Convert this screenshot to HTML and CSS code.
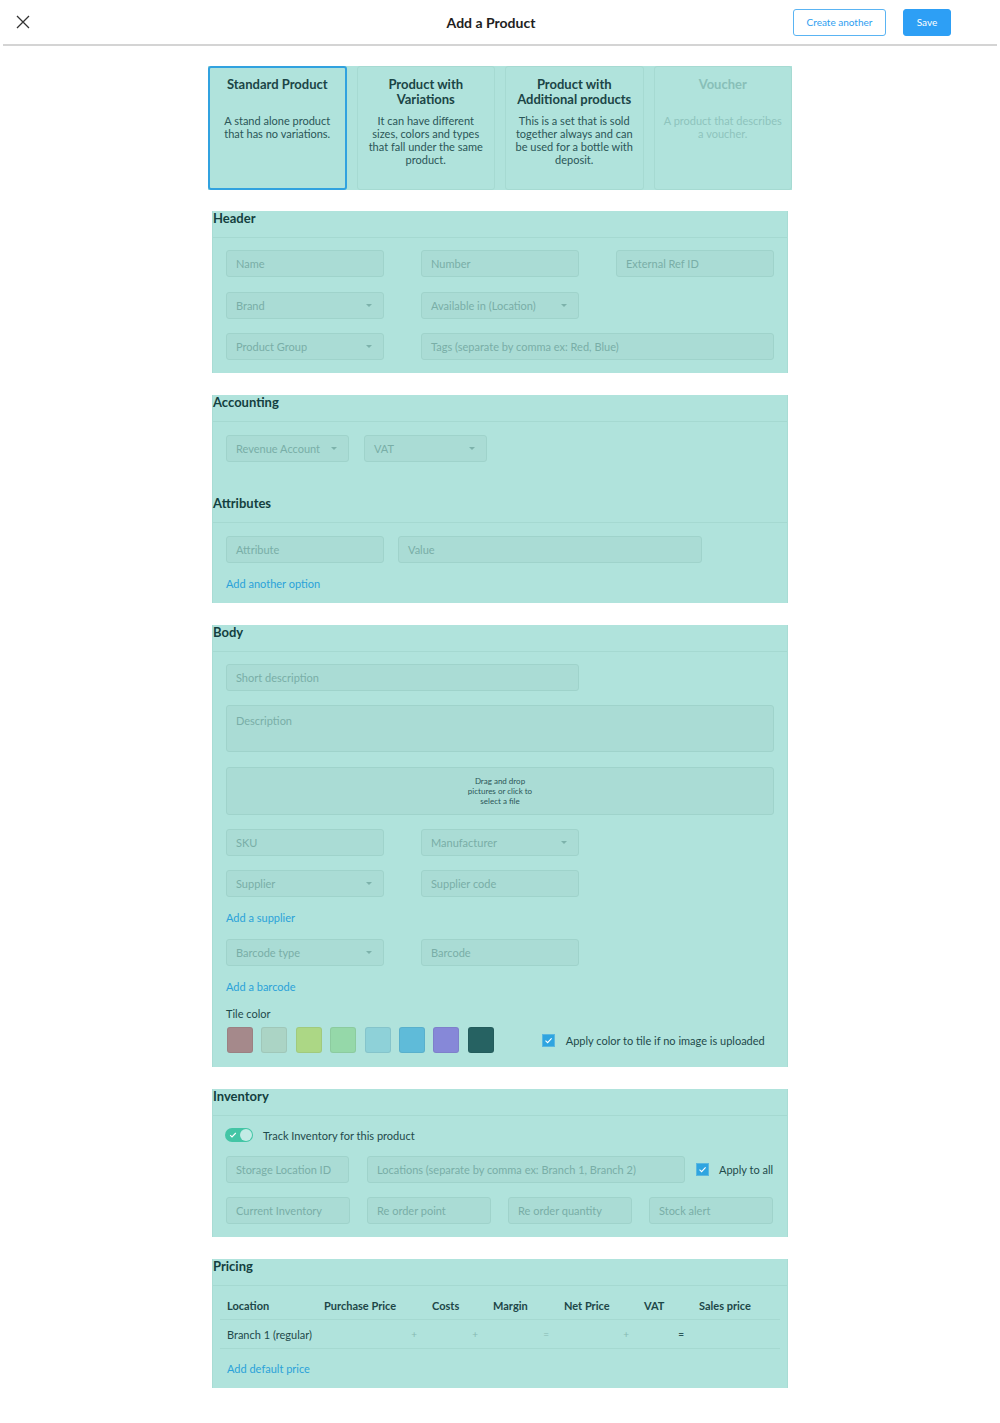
FILE: index.html
```html
<!DOCTYPE html>
<html>
<head>
<meta charset="utf-8">
<title>Add a Product</title>
<link rel="stylesheet" href="styles.css">
</head>
<body>
<header class="topbar">
  <div class="tb-left">
    <svg class="close" width="14" height="14" viewBox="0 0 14 14"><path d="M1 1L13 13M13 1L1 13" stroke="#333" stroke-width="1.3" fill="none"/></svg>
  </div>
  <h1 class="tb-title">Add a Product</h1>
  <div class="tb-right">
    <button class="btn btn-outline">Create another</button>
    <button class="btn btn-primary">Save</button>
  </div>
</header>

<main class="page">
  <div class="types">
    <div class="type-card selected">
      <div class="type-title">Standard Product</div>
      <div class="type-desc">A stand alone product that has no variations.</div>
    </div>
    <div class="type-card">
      <div class="type-title">Product with Variations</div>
      <div class="type-desc">It can have different sizes, colors and types that fall under the same product.</div>
    </div>
    <div class="type-card">
      <div class="type-title">Product with Additional products</div>
      <div class="type-desc">This is a set that is sold together always and can be used for a bottle with deposit.</div>
    </div>
    <div class="type-card disabled">
      <div class="type-title">Voucher</div>
      <div class="type-desc">A product that describes a voucher.</div>
    </div>
  </div>

  <section class="block first">
    <h2 class="sec-title">Header</h2>
    <div class="panel grid3">
      <div class="field">Name</div>
      <div class="field">Number</div>
      <div class="field">External Ref ID</div>
      <div class="field select">Brand</div>
      <div class="field select">Available in (Location)</div>
      <div></div>
      <div class="field select">Product Group</div>
      <div class="field span2">Tags (separate by comma ex: Red, Blue)</div>
    </div>
  </section>

  <section class="block group">
    <div class="sub">
      <h2 class="sec-title">Accounting</h2>
      <div class="panel row-acc">
        <div class="field select w123">Revenue Account</div>
        <div class="field select w123">VAT</div>
      </div>
    </div>
    <div class="sub">
      <h2 class="sec-title">Attributes</h2>
      <div class="panel col attr">
        <div class="row-attr">
          <div class="field w158">Attribute</div>
          <div class="field wval">Value</div>
        </div>
        <a class="link">Add another option</a>
      </div>
    </div>
  </section>

  <section class="block">
    <h2 class="sec-title">Body</h2>
    <div class="panel col body-panel">
      <div class="field w353">Short description</div>
      <div class="field area">Description</div>
      <div class="drop">Drag and drop<br>pictures or click to<br>select a file</div>
      <div class="pair">
        <div class="field">SKU</div>
        <div class="field select">Manufacturer</div>
      </div>
      <div class="pair">
        <div class="field select">Supplier</div>
        <div class="field">Supplier code</div>
      </div>
      <a class="link">Add a supplier</a>
      <div class="pair">
        <div class="field select">Barcode type</div>
        <div class="field">Barcode</div>
      </div>
      <a class="link">Add a barcode</a>
      <div class="tile">
        <div class="tile-label">Tile color</div>
        <div class="tile-row">
          <div class="swatches">
            <span class="sw" style="background:#a5898b"></span>
            <span class="sw" style="background:#abd4c5"></span>
            <span class="sw" style="background:#acd785"></span>
            <span class="sw" style="background:#95d8a9"></span>
            <span class="sw" style="background:#8ed1d8"></span>
            <span class="sw" style="background:#5fbbd9"></span>
            <span class="sw" style="background:#8688d8"></span>
            <span class="sw" style="background:#266262"></span>
          </div>
          <label class="check">
            <span class="box"><svg width="9" height="9" viewBox="0 0 9 9"><path d="M1.5 4.7L3.6 6.7L7.6 2.3" stroke="#fff" stroke-width="1.1" fill="none"/></svg></span>
            Apply color to tile if no image is uploaded
          </label>
        </div>
      </div>
    </div>
  </section>

  <section class="block">
    <h2 class="sec-title">Inventory</h2>
    <div class="panel col inv">
      <div class="toggle-row">
        <span class="toggle"><svg class="tick" width="8" height="8" viewBox="0 0 8 8"><path d="M1.2 4.2L3 6L6.8 2" stroke="#fff" stroke-width="1.1" fill="none"/></svg><span class="knob"></span></span>
        <span class="toggle-label">Track Inventory for this product</span>
      </div>
      <div class="inv-row1">
        <div class="field w123">Storage Location ID</div>
        <div class="field wloc">Locations (separate by comma ex: Branch 1, Branch 2)</div>
        <label class="check">
          <span class="box"><svg width="9" height="9" viewBox="0 0 9 9"><path d="M1.5 4.7L3.6 6.7L7.6 2.3" stroke="#fff" stroke-width="1.1" fill="none"/></svg></span>
          Apply to all
        </label>
      </div>
      <div class="grid4">
        <div class="field">Current Inventory</div>
        <div class="field">Re order point</div>
        <div class="field">Re order quantity</div>
        <div class="field">Stock alert</div>
      </div>
    </div>
  </section>

  <section class="block">
    <h2 class="sec-title">Pricing</h2>
    <div class="panel pricing">
      <div class="ptable">
        <div class="prow phead">
          <div>Location</div>
          <div>Purchase Price</div>
          <div>Costs</div>
          <div>Margin</div>
          <div>Net Price</div>
          <div>VAT</div>
          <div>Sales price</div>
        </div>
        <div class="prow pbody">
          <div class="loc">Branch 1 (regular)</div>
          <div class="op">+</div>
          <div class="op">+</div>
          <div class="op">=</div>
          <div class="op">+</div>
          <div class="op dark">=</div>
          <div></div>
        </div>
      </div>
      <a class="link plink">Add default price</a>
    </div>
  </section>
</main>
</body>
</html>
```

FILE: styles.css
```css
* { box-sizing: border-box; }

body {
  margin: 0;
  background: #ffffff;
  font-family: Lato, "Open Sans", "Liberation Sans", sans-serif;
  color: #1b4546;
}

.topbar {
  margin: 0 3px;
  height: 46px;
  border-bottom: 2px solid #d4d4d4;
  display: grid;
  grid-template-columns: 1fr auto 1fr;
  align-items: center;
}

.tb-left {
  padding-left: 13px;
  display: flex;
  align-items: center;
}

.close { display: block; }

.tb-title {
  margin: 0 18px 0 0;
  font-size: 14px;
  font-weight: 700;
  color: #1e1e1e;
}

.tb-right {
  display: flex;
  justify-content: flex-end;
  gap: 17px;
  padding-right: 46px;
}

.btn {
  font-family: Lato, "Open Sans", "Liberation Sans", sans-serif;
  font-size: 10px;
  height: 27px;
  border-radius: 3px;
  padding: 0;
  cursor: pointer;
}

.btn-outline {
  width: 93px;
  background: #fff;
  color: #2d9ef0;
  border: 1px solid #5ab4f3;
}

.btn-primary {
  width: 48px;
  background: #2d9ff5;
  color: #fff;
  border: 1px solid #2d9ff5;
}

.page {
  width: 584px;
  margin: 20px auto 0;
  padding-bottom: 30px;
}

.types {
  display: grid;
  grid-template-columns: repeat(4, 1fr);
  gap: 10px;
  background: #b0e3dc;
  height: 124px;
}

.type-card {
  border: 1px solid #a6dad2;
  border-radius: 3px;
  background: #b0e3dc;
  padding: 10px 7px 0;
  text-align: center;
}

.type-card.selected {
  border: 2px solid #31a2df;
  padding-top: 9px;
}

.type-title {
  height: 30px;
  font-size: 13px;
  line-height: 15px;
  font-weight: 700;
  color: #1b4546;
}

.type-desc {
  margin-top: 7px;
  font-size: 11px;
  line-height: 13px;
  color: #2b5657;
}

.type-card.disabled .type-title { color: #88bfb8; }
.type-card.disabled .type-desc { color: #8ec4bd; }

.block {
  width: 576px;
  margin: 22px auto 0;
  background: #b0e3dc;
  border-left: 1px solid #a8dcd4;
  border-right: 1px solid #a8dcd4;
}

.block.first { margin-top: 21px; }

.group {
  display: flex;
  flex-direction: column;
  gap: 22px;
}

.sec-title {
  margin: 0;
  height: 26px;
  font-size: 13px;
  line-height: 14px;
  font-weight: 700;
  color: #143f40;
}

.panel {
  border-top: 1px solid #a5d9d1;
  padding: 12px 13px 13px 13px;
}

.col {
  display: flex;
  flex-direction: column;
  align-items: flex-start;
  gap: 14px;
}

.grid3 {
  display: grid;
  grid-template-columns: 158px 158px 158px;
  column-gap: 37px;
  row-gap: 14.5px;
}

.span2 { grid-column: span 2; }

.field {
  position: relative;
  height: 27px;
  background: #aadcd5;
  border: 1px solid #9fd3cb;
  border-radius: 3px;
  font-size: 11px;
  line-height: 25px;
  color: #79aea7;
  padding-left: 9px;
  white-space: nowrap;
  overflow: hidden;
}

.field.select::after {
  content: "";
  position: absolute;
  right: 11px;
  top: 11px;
  border-left: 3px solid transparent;
  border-right: 3px solid transparent;
  border-top: 3px solid #7db2ab;
}

.w123 { width: 123px; }
.w158 { width: 158px; }
.wval { width: 304px; }
.w353 { width: 353px; }
.wloc { width: 318px; }

.row-acc {
  display: flex;
  gap: 15px;
  padding-top: 13px;
  padding-bottom: 12px;
}

.attr {
  padding-top: 13px;
  padding-bottom: 12px;
}

.row-attr {
  display: flex;
  gap: 14px;
}

.link {
  font-size: 11px;
  line-height: 14px;
  color: #2ba2d9;
  cursor: pointer;
}

.body-panel { padding-bottom: 14px; }

.field.area {
  width: 548px;
  height: 47px;
  line-height: 30px;
}

.drop {
  width: 548px;
  height: 48px;
  background: #aadcd5;
  border: 1px solid #9fd3cb;
  border-radius: 3px;
  font-size: 8px;
  line-height: 10px;
  color: #2b5657;
  text-align: center;
  padding-top: 8px;
  margin-top: 1px;
}

.pair {
  display: grid;
  grid-template-columns: 158px 158px;
  column-gap: 37px;
}

.tile {
  display: flex;
  flex-direction: column;
  gap: 7px;
  margin-top: -1px;
}

.tile-label {
  font-size: 11px;
  line-height: 13px;
  color: #1f4a4b;
}

.tile-row {
  display: flex;
  align-items: center;
}

.swatches {
  display: flex;
  gap: 8.4px;
  padding-left: 1px;
}

.sw {
  width: 26px;
  height: 26px;
  border-radius: 3px;
  border: 1px solid rgba(0,0,0,0.06);
}

.check {
  display: flex;
  align-items: center;
  gap: 11px;
  font-size: 11px;
  color: #1f4a4b;
  white-space: nowrap;
}

.tile-row .check { margin-left: 48px; }

.box {
  flex: none;
  width: 13px;
  height: 13px;
  background: #2fa5e0;
  border: 1px solid #5ab8e0;
  display: flex;
  align-items: center;
  justify-content: center;
}

.box svg { display: block; }

.inv { gap: 14px; }

.toggle-row {
  display: flex;
  align-items: center;
  gap: 10px;
  height: 14px;
  margin-left: -1px;
}

.toggle {
  position: relative;
  width: 28px;
  height: 14px;
  border-radius: 7px;
  background: #43c5a5;
  display: flex;
  align-items: center;
  padding-left: 4px;
}

.tick { display: block; }

.knob {
  position: absolute;
  right: 1px;
  top: 1px;
  width: 12px;
  height: 12px;
  border-radius: 50%;
  background: #c3ebe5;
}

.toggle-label {
  font-size: 11px;
  color: #1f4a4b;
}

.inv-row1 {
  display: flex;
  align-items: center;
  gap: 18px;
}

.inv-row1 .check { margin-left: -7px; gap: 10px; }

.grid4 {
  display: grid;
  grid-template-columns: repeat(4, 123.5px);
  column-gap: 17.5px;
}

.pricing {
  padding: 5px 9px 12px 7px;
  display: flex;
  flex-direction: column;
}

.ptable { width: 560px; }

.prow {
  display: grid;
  grid-template-columns: 104px 108px 61px 71px 80px 55px 81px;
  height: 29px;
  align-items: center;
  border-bottom: 1px solid #a5d9d1;
  font-size: 11px;
}

.prow > div:first-child { padding-left: 7px; }

.phead { font-weight: 700; color: #1d4748; }

.pbody { color: #1f4a4b; }

.op {
  text-align: right;
  padding-right: 15px;
  color: #86bab3;
  font-size: 10px;
}

.op.dark { color: #2b5657; font-weight: 700; }

.plink {
  margin-top: 13px;
  margin-left: 7px;
  align-self: flex-start;
}
```
